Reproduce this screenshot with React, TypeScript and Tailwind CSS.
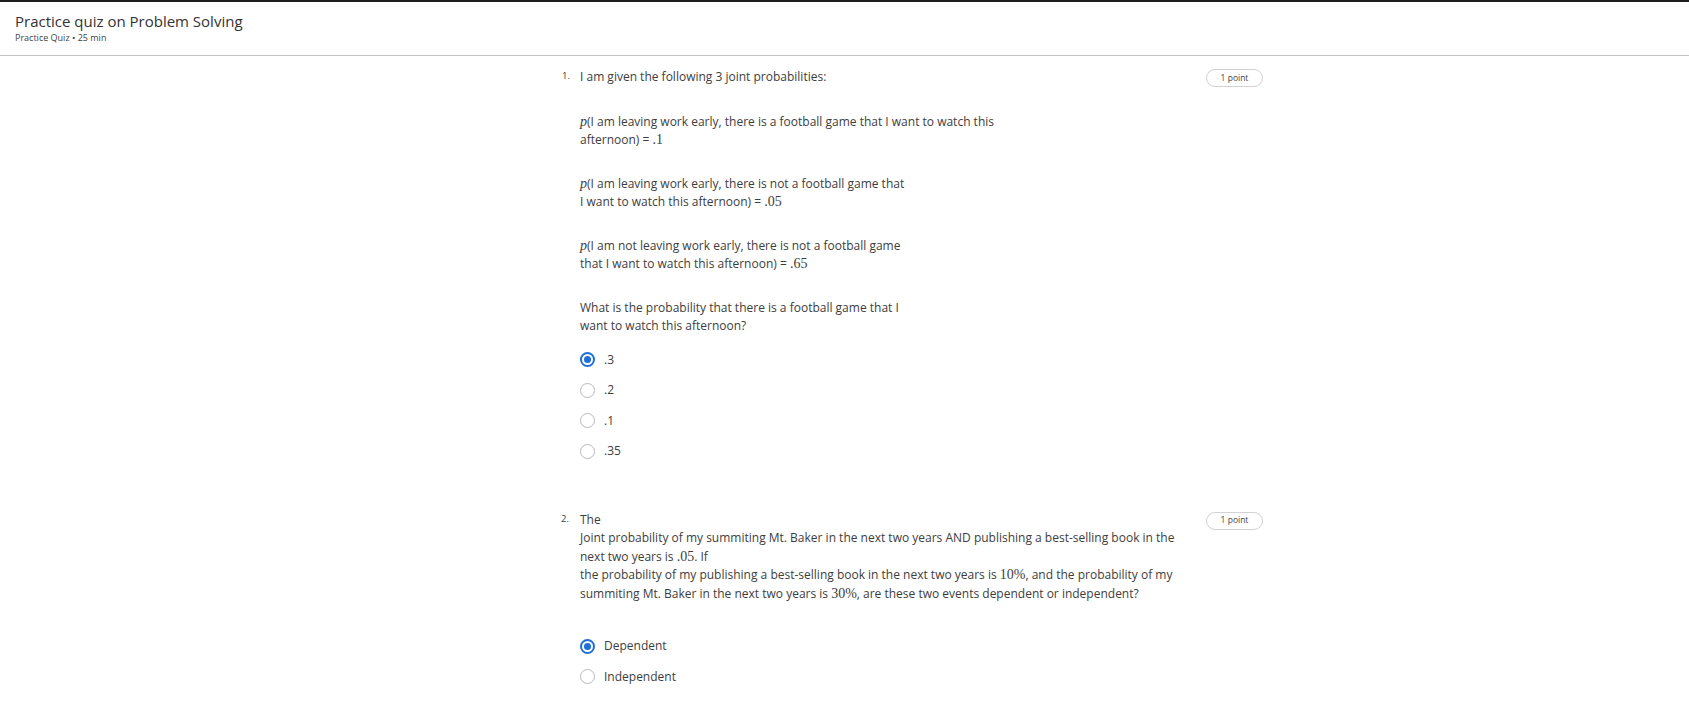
import React from 'react';

const Radio: React.FC<{ checked?: boolean; label: string }> = ({ checked, label }) => (
  <div className="flex items-center h-[30.5px]">
    {checked ? (
      <span className="w-[15px] h-[15px] rounded-full border-2 border-[#1f6fd4] flex items-center justify-center">
        <span className="w-[7px] h-[7px] rounded-full bg-[#1f6fd4]" />
      </span>
    ) : (
      <span className="w-[15px] h-[15px] rounded-full border-[1.5px] border-[#b9b9b9]" />
    )}
    <span className="ml-[9px]">{label}</span>
  </div>
);

const Point: React.FC = () => (
  <span className="shrink-0 h-[18px] w-[57px] rounded-full border border-[#d2d2d2] text-[8.5px] text-[#444] flex items-center justify-center">
    1 point
  </span>
);

const M: React.FC<{ children: React.ReactNode }> = ({ children }) => (
  <span className="font-['Liberation_Serif',serif] text-[14px]">{children}</span>
);

const P: React.FC = () => <span className="font-['Liberation_Serif',serif] italic text-[14px]">p</span>;

export default function App() {
  return (
    <div className="min-h-screen bg-white font-['Open_Sans',sans-serif] text-[#3d3d3d]">
      <header className="h-[56px] border-t-2 border-t-[#1e1e1e] border-b border-b-[#c4c4c4] px-[15px] pt-[9px]">
        <h1 className="text-[15px] leading-[21px] text-[#333]">Practice quiz on Problem Solving</h1>
        <p className="text-[9px] leading-[12px] text-[#444]">Practice Quiz • 25 min</p>
      </header>

      <main className="ml-[557px] w-[706px] pt-[12px] text-[12px] leading-[18.5px]">
        <section className="flex">
          <span className="w-[23px] shrink-0 text-[9.5px] pl-[5px] leading-[16px]">1.</span>
          <div className="flex-1">
            <p>I am given the following 3 joint probabilities:</p>
            <p className="mt-[26px]">
              <P />(I am leaving work early, there is a football game that I want to watch this
              <br />
              afternoon) = <M>.1</M>
            </p>
            <p className="mt-[25px]">
              <P />(I am leaving work early, there is not a football game that
              <br />
              I want to watch this afternoon) = <M>.05</M>
            </p>
            <p className="mt-[25px]">
              <P />(I am not leaving work early, there is not a football game
              <br />
              that I want to watch this afternoon) = <M>.65</M>
            </p>
            <p className="mt-[25px]">
              What is the probability that there is a football game that I
              <br />
              want to watch this afternoon?
            </p>
            <div className="mt-[9px]">
              <Radio checked label=".3" />
              <Radio label=".2" />
              <Radio label=".1" />
              <Radio label=".35" />
            </div>
          </div>
          <div className="pt-[1px]">
            <Point />
          </div>
        </section>

        <section className="flex mt-[44px]">
          <span className="w-[23px] shrink-0 text-[9.5px] pl-[4px] leading-[16px]">2.</span>
          <div className="flex-1 pr-[10px]">
            <p>
              The
              <br />
              Joint probability of my summiting Mt. Baker in the next two years AND publishing a best-selling book in the
              <br />
              next two years is <M>.05</M>. If
              <br />
              the probability of my publishing a best-selling book in the next two years is <M>10%</M>, and the probability of my
              <br />
              summiting Mt. Baker in the next two years is <M>30%</M>, are these two events dependent or independent?
            </p>
            <div className="mt-[28px]">
              <Radio checked label="Dependent" />
              <Radio label="Independent" />
            </div>
          </div>
          <div className="pt-[1px]">
            <Point />
          </div>
        </section>
      </main>
    </div>
  );
}
